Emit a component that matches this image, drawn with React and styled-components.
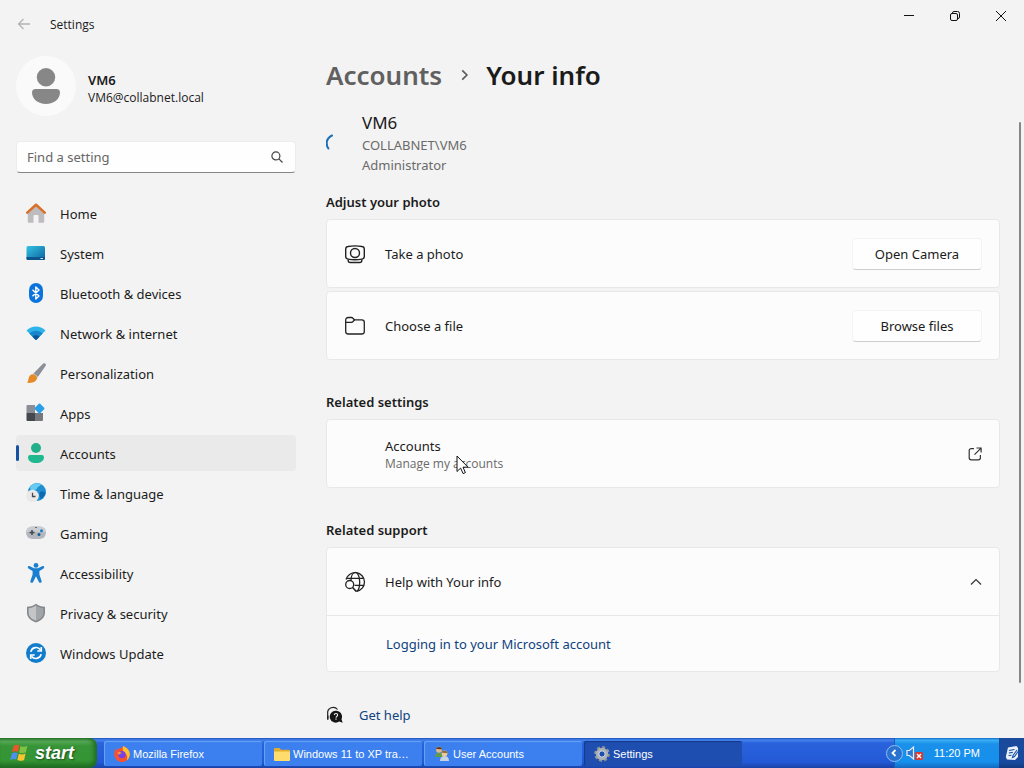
import React from 'react'
import styled, { createGlobalStyle } from 'styled-components'

const HomeIcon = () => (
    <svg width="20" height="20" viewBox="0 0 20 20">
        <path d="M1.800 9.500 10 2.400l8.200 7.100V19a.8.8 0 0 1-.8.8h-4.900V13a1 1 0 0 0-1-1h-3a1 1 0 0 0-1 1v6.800H2.600a.8.8 0 0 1-.8-.8z" fill="#bfbcc0" />
        <path d="M1.300 9.600 10 1.800l8.700 7.800" fill="none" stroke="#d9712b" strokeWidth="2.600" strokeLinecap="round" strokeLinejoin="round" />
    </svg>
)

const SystemIcon = () => (
    <svg width="20" height="20" viewBox="0 0 20 20">
        <defs>
            <linearGradient id="screen" x1="0" y1="0" x2="1" y2="1">
                <stop offset="0" stopColor="#35c3e0" />
                <stop offset="1" stopColor="#0a62a3" />
            </linearGradient>
        </defs>
        <rect x="0.500" y="3" width="18.500" height="14" rx="1.500" fill="url(#screen)" />
        <path d="M.5 14h18.500v1.500A1.500 1.500 0 0 1 17.500 17h-15A1.500 1.500 0 0 1 .5 15.500z" fill="#0b548c" />
        <path d="M14.500 15.500h2.500" stroke="#d7eef8" strokeWidth="1" />
    </svg>
)

const BluetoothIcon = () => (
    <svg width="20" height="20" viewBox="0 0 20 20">
        <rect x="3" y="0" width="14" height="20" rx="7" fill="#0a74dc" />
        <path d="M6.500 6.800 13 13l-3.200 3V4L13 7l-6.500 6.200" fill="none" stroke="#fff" strokeWidth="1.400" strokeLinejoin="round" />
    </svg>
)

const NetworkIcon = () => (
    <svg width="20" height="20" viewBox="0 0 20 20">
        <path d="M.5 7.500C5.800 2.200 14.200 2.200 19.500 7.500L10.700 16.600a1 1 0 0 1-1.400 0z" fill="#2fb4ea" />
        <path d="M3.400 10.400c3.700-3.500 9.500-3.500 13.200 0l-5.900 6.200a1 1 0 0 1-1.400 0z" fill="#1585cc" />
        <path d="M6.500 13.700c2-1.800 5-1.800 7 0l-2.800 2.900a1 1 0 0 1-1.400 0z" fill="#0b5596" />
    </svg>
)

const BrushIcon = () => (
    <svg width="20" height="20" viewBox="0 0 20 20">
        <path d="M19.200.5c.9.7.9 1.700.3 2.600L11.500 14.500 7 11 16.700.9c.7-.8 1.700-.9 2.500-.4z" fill="#8c8f96" />
        <path d="m7.800 10.200 4.400 3.500-1.600 2.100-4.500-3.600z" fill="#c6c8cc" />
        <path d="M6.600 11.200c2.400.2 4.400 2 4.400 4.100-.8 3.700-5.700 5.400-10.200 4.200 1.700-1.200 1.200-2.600 1.900-4.600.7-2.200 1.900-3.600 3.900-3.700z" fill="#e68a27" />
    </svg>
)

const AppsIcon = () => (
    <svg width="20" height="20" viewBox="0 0 20 20">
        <path d="M1.500 2H9v8H.5V3a1 1 0 0 1 1-1z" fill="#8b8e92" />
        <path d="M.5 10H9v8H1.500a1 1 0 0 1-1-1z" fill="#45484d" />
        <path d="M9 10h8v7a1 1 0 0 1-1 1H9z" fill="#75787c" />
        <rect x="9.700" y="1.700" width="7.600" height="7.600" rx="1" transform="rotate(45 13.500 5.500)" fill="#2b9fe6" />
    </svg>
)

const AccountsIcon = () => (
    <svg width="20" height="20" viewBox="0 0 20 20">
        <circle cx="10" cy="5" r="5" fill="#22b08a" />
        <path d="M4.200 12h11.600A2.200 2.200 0 0 1 18 14.200c0 3.600-3.500 5.800-8 5.800s-8-2.200-8-5.800A2.200 2.200 0 0 1 4.200 12z" fill="#20b98f" />
    </svg>
)

const TimeIcon = () => (
    <svg width="20" height="20" viewBox="0 0 20 20">
        <circle cx="11" cy="9" r="9" fill="#1f8fd1" />
        <path d="M4 4c3-3.600 7.500-4.500 11-2.800-1 2.500-3.500 2-4 4.300-.5 2-4 1-6 3.500z" fill="#66cdf0" />
        <path d="M14 9c2-1.500 4-.5 5.500 1-.7 3-2.500 5-5 6-.2-2.500-2-4.500-.5-7z" fill="#0d6cb1" />
        <circle cx="6.500" cy="13" r="6.300" fill="#ebe9e8" />
        <path d="M6.500 9.800v3.700h3" fill="none" stroke="#45484d" strokeWidth="1.300" />
    </svg>
)

const GamingIcon = () => (
    <svg width="20" height="20" viewBox="0 0 20 20">
        <rect x="0" y="3.500" width="20" height="12.500" rx="6.250" fill="#b3b8be" />
        <path d="M6.250 3.500h7.500c4 0 6.250 3 6.250 5.500H0c0-2.500 2.250-5.500 6.250-5.500z" fill="#c9cdd2" />
        <path d="M6 7v5M3.500 9.500h5" stroke="#43464b" strokeWidth="1.500" />
        <circle cx="15.500" cy="7.800" r="1.500" fill="#1a80c0" />
        <circle cx="13" cy="11.600" r="1.500" fill="#125f96" />
        <path d="M9 4.500h2" stroke="#66696e" strokeWidth="1" />
    </svg>
)

const AccessibilityIcon = () => (
    <svg width="20" height="20" viewBox="0 0 20 20">
        <circle cx="10" cy="2.400" r="2.400" fill="#1a7fd0" />
        <path d="M3.500 3 8 5.300h4L16.500 3c1.500-.6 2.400 1.600 1.100 2.400L13.400 8v3.500l2.200 6.500c.5 1.800-2 2.600-2.700.9L10 13.300l-2.900 5.600c-.7 1.700-3.200.9-2.700-.9l2.200-6.500V8L2.400 5.400C1.100 4.600 2 2.400 3.500 3z" fill="#1a7fd0" />
    </svg>
)

const PrivacyIcon = () => (
    <svg width="20" height="20" viewBox="0 0 20 20">
        <path d="M10 .8c2.500 2 5.500 2.900 9 3v5.700c0 4.700-3.400 8-9 10-5.600-2-9-5.300-9-10V3.800c3.500-.1 6.500-1 9-3z" fill="#85888b" />
        <path d="M10 2.500v15.300c-4.700-1.800-7.400-4.500-7.400-8.300V5.200C5.400 5 7.900 4.100 10 2.500z" fill="#c3c5c6" />
        <path d="M10 2.500v15.300c4.700-1.800 7.400-4.500 7.400-8.300V5.200C14.600 5 12.100 4.100 10 2.500z" fill="#a2a5a7" />
    </svg>
)

const UpdateIcon = () => (
    <svg width="20" height="20" viewBox="0 0 20 20">
        <circle cx="10" cy="10" r="10" fill="#127ccc" />
        <path d="M4.800 8.800a5.400 5.400 0 0 1 9.700-2M15.200 11.200a5.400 5.400 0 0 1-9.700 2" fill="none" stroke="#fff" strokeWidth="1.600" />
        <path d="M15.300 4v4h-4M4.700 16v-4h4" fill="none" stroke="#fff" strokeWidth="1.600" />
    </svg>
)

const CameraIcon = () => (
    <svg width="22" height="22" viewBox="0 0 22 22" fill="none" stroke="#222" strokeWidth="1.400">
        <path d="M4 3.500Q11 2.300 18 3.500A2.600 2.600 0 0 1 20.300 6v7.600a2.600 2.600 0 0 1-2.300 2.500Q11 17.300 4 16.100a2.600 2.600 0 0 1-2.300-2.500V6A2.600 2.600 0 0 1 4 3.500z" />
        <circle cx="11" cy="10" r="4.500" />
        <path d="M4.200 16.500v1a2 2 0 0 0 2 2h9.600a2 2 0 0 0 2-2v-1" />
    </svg>
)

const FolderIcon = () => (
    <svg width="22" height="22" viewBox="0 0 22 22" fill="none" stroke="#222" strokeWidth="1.300">
        <path d="M1.700 16.500V5a2.500 2.500 0 0 1 2.500-2.500h3.200a2 2 0 0 1 1.500.7l1.500 1.600h7.400A2.500 2.500 0 0 1 20.300 7.300v9.200a2.500 2.500 0 0 1-2.500 2.500H4.200a2.500 2.500 0 0 1-2.500-2.500z" />
        <path d="M1.700 7.300h5.700a2 2 0 0 0 1.400-.6l1.800-1.900" />
    </svg>
)

const GlobeSearchIcon = () => (
    <svg width="22" height="22" viewBox="0 0 22 22" fill="none" stroke="#222" strokeWidth="1.300">
        <path d="M2 8.500a9.400 9.400 0 1 1 10.500 11.800" />
        <path d="M7 9c.2-4.200 2-7.600 4.300-7.600 2.500 0 4.400 4.200 4.400 9.400s-1.300 9-3.200 9.500" />
        <path d="M2.600 7.400h17.400M10.500 14.400H20" />
        <circle cx="5.700" cy="13.500" r="4" />
        <path d="m8.600 16.500 3.700 4" strokeWidth="1.600" />
    </svg>
)

const HelpIcon = () => (
    <svg width="18" height="18" viewBox="0 0 18 18">
        <path d="M1.700 13.500V7.500A5.500 5.500 0 0 1 11.500 3.500" fill="none" stroke="#222" strokeWidth="1.200" />
        <path d="M1 9.500h1.500v4H1z" fill="#222" />
        <path d="M10 4.700a6 6 0 0 1 5.500 8.500l1.200 3.600-3.500-1.200A6 6 0 1 1 10 4.700z" fill="#161616" />
        <path d="M8.300 9c.2-2 3.400-1.900 3.300 0 0 1.300-1.500 1.300-1.600 2.600M10 12.600v1.100" fill="none" stroke="#f3f3f3" strokeWidth="1.100" />
    </svg>
)

const OpenIcon = () => (
    <svg width="14" height="14" viewBox="0 0 14 14" fill="none" stroke="#333" strokeWidth="1.200">
        <path d="M6 1.600H3.200A2 2 0 0 0 1.200 3.600v7.200a2 2 0 0 0 2 2h7.200a2 2 0 0 0 2-2V8" />
        <path d="M8.500 1h4.600v4.600M13 1.200 6.500 7.700" />
    </svg>
)

const Chevron = ({ up, size = 12 }) => (
    <svg width={size} height={size} viewBox="0 0 12 12" fill="none" stroke={up ? '#333' : '#5c5c5c'} strokeWidth={up ? 1.2 : 1.4}>
        <path d={up ? 'M1 8.500 6 3.500l5 5' : 'M4.500 2 8.500 6l-4 4'} />
    </svg>
)

const BackIcon = () => (
    <svg width="14" height="12" viewBox="0 0 14 12" fill="none" stroke="#b4b4b4" strokeWidth="1.300">
        <path d="M13 6H1.500M6.500 1l-5 5 5 5" />
    </svg>
)

const SearchIcon = () => (
    <svg width="12" height="12" viewBox="0 0 12 12" fill="none" stroke="#444" strokeWidth="1.200">
        <circle cx="4.900" cy="4.900" r="4" />
        <path d="m7.900 7.900 3.600 3.600" />
    </svg>
)

const Person = () => (
    <svg width="28" height="36" viewBox="0 0 28 36" fill="#878787">
        <circle cx="14" cy="9.300" r="9.200" />
        <path d="M3.500 21h21a3.500 3.500 0 0 1 3.500 3.500C28 31 22 36 14 36S0 31 0 24.500A3.500 3.500 0 0 1 3.500 21z" />
    </svg>
)

const Spinner = () => (
    <svg width="8" height="20" viewBox="0 0 8 20" fill="none">
        <path d="M6 2.500C0 5.500-.5 11 2.400 15.500" stroke="#1a6fb5" strokeWidth="2" strokeLinecap="round" />
    </svg>
)

const Pointer = () => (
    <svg width="13" height="20" viewBox="0 0 13 20">
        <path d="M1 1v15.500l3.600-3.400 2.500 5.500 2.300-1-2.400-5.400h5z" fill="#fff" stroke="#111" strokeWidth="1" />
    </svg>
)

const FlagIcon = () => (
    <svg width="20" height="20" viewBox="0 0 18 18">
        <path d="M3.200 2.500C5 1.200 7 1.300 8.500 2.200L7.200 8C5.500 7 3.700 7.200 1.900 8.300z" fill="#e8562a" />
        <path d="M9.500 2.700c1.900 1 3.900.9 6.200-.2L14.300 8.300c-2.300 1.100-4.200 1-6.100.2z" fill="#7dc243" />
        <path d="M1.600 9.400c1.900-1.100 3.700-1.200 5.300-.3l-1.300 5.800c-1.700-.9-3.500-.8-5.400.3z" fill="#4f8ff0" />
        <path d="M7.900 9.600c2 .9 3.900.9 6.100-.1l-1.300 5.700c-2.200 1.100-4.200 1.100-6.100.2z" fill="#f7c52d" />
    </svg>
)

const FirefoxIcon = () => (
    <svg width="16" height="16" viewBox="0 0 16 16">
        <path d="M8 1.800c1-.9 1.300-1.800 1.300-1.800 3.500 1.500 6.500 4.400 6.500 8.300a7.800 7.800 0 0 1-15.600 0c0-2.500 1-4.800 2-6 .2 1.200.8 1.700 1.300 1.900C4.500 2.600 6.300 1.800 8 1.800z" fill="#f6522f" />
        <path d="M9.300 0c3.500 1.500 6.500 4.400 6.500 8.300 0 2.500-1.200 4.700-3 6.100 1.300-4.400-.2-6.500-2.500-8C8.800 5.300 8 2.500 9.300 0z" fill="#ffc22e" />
        <circle cx="8" cy="8.700" r="3.600" fill="#7542e5" />
        <path d="M3.500 6.500c1.600-1 3.400-.3 4.200.7-1.200.3-2.200.7-2.700 1.800z" fill="#ff9b35" />
    </svg>
)

const XpFolderIcon = () => (
    <svg width="16" height="14" viewBox="0 0 16 14">
        <path d="M0 2a1 1 0 0 1 1-1h4.500L7 2.700h8a1 1 0 0 1 1 1V13H0z" fill="#e2ac30" />
        <path d="M0 4.500h16V13a1 1 0 0 1-1 1H1a1 1 0 0 1-1-1z" fill="#ffdc6b" />
    </svg>
)

const UsersIcon = () => (
    <svg width="16" height="16" viewBox="0 0 16 16">
        <path d="M1 11c0-3 1.500-4.500 4-4.500S9 8 9 11z" fill="#5e9b4c" />
        <circle cx="5" cy="3.700" r="3" fill="#e5b887" />
        <path d="M2 3.300C2 .5 8 .2 8 3.300 6 3.500 4 2.500 2 3.300z" fill="#5b3c22" />
        <path d="M6 15c0-3.500 1.800-5 4.500-5s4.500 1.500 4.500 5z" fill="#c8d3e2" />
        <circle cx="10.500" cy="7.500" r="2.900" fill="#f0c99a" />
        <path d="M7.600 7c0-3 5.800-3 5.800 0-2 .2-3.800-.8-5.800 0z" fill="#8d6a31" />
    </svg>
)

const GearIcon = () => (
    <svg width="16" height="16" viewBox="0 0 16 16">
        <circle cx="8" cy="8" r="6.600" fill="none" stroke="#8b9599" strokeWidth="2.600" strokeDasharray="2.900 2.280" />
        <circle cx="8" cy="8" r="4.700" fill="none" stroke="#aab2b3" strokeWidth="3" />
        <circle cx="8" cy="8" r="3.200" fill="#1f4fae" stroke="#e8eced" strokeWidth="1" />
    </svg>
)

const VolumeIcon = () => (
    <svg width="18" height="16" viewBox="0 0 18 16">
        <path d="M1 5.500h2.500L7.500 2v12l-4-3.500H1z" fill="#2a7bd8" stroke="#e6eef8" strokeWidth="1.200" />
        <rect x="9" y="7" width="8" height="8" rx="1" fill="#d93a2f" />
        <path d="m11 9 4 4m0-4-4 4" stroke="#fff" strokeWidth="1.400" />
    </svg>
)

const NotesIcon = () => (
    <svg width="14" height="16" viewBox="0 0 14 16">
        <path d="M3 2.500 11.500 1 13 3v9l-3 3-8-.5L.8 12z" fill="#e9f2fb" />
        <path d="M4 5.500 9.500 4.500M3.800 8l4-.6M3.500 10.500l3-.3M12 5 8 10.500l-.5 2 2-1L13 6.500" fill="none" stroke="#1b4f9f" strokeWidth="1.100" />
    </svg>
)

const navItems = [
    { label: 'Home', icon: <HomeIcon /> },
    { label: 'System', icon: <SystemIcon /> },
    { label: 'Bluetooth & devices', icon: <BluetoothIcon /> },
    { label: 'Network & internet', icon: <NetworkIcon /> },
    { label: 'Personalization', icon: <BrushIcon /> },
    { label: 'Apps', icon: <AppsIcon /> },
    { label: 'Accounts', icon: <AccountsIcon />, active: true },
    { label: 'Time & language', icon: <TimeIcon /> },
    { label: 'Gaming', icon: <GamingIcon /> },
    { label: 'Accessibility', icon: <AccessibilityIcon /> },
    { label: 'Privacy & security', icon: <PrivacyIcon /> },
    { label: 'Windows Update', icon: <UpdateIcon /> },
]

const photoRows = [
    { label: 'Take a photo', action: 'Open Camera', icon: <CameraIcon /> },
    { label: 'Choose a file', action: 'Browse files', icon: <FolderIcon /> },
]

const tasks = [
    { label: 'Mozilla Firefox', icon: <FirefoxIcon /> },
    { label: 'Windows 11 to XP tran...', icon: <XpFolderIcon /> },
    { label: 'User Accounts', icon: <UsersIcon /> },
    { label: 'Settings', icon: <GearIcon />, active: true },
]

const TitleBar = () => (
    <Header>
        <BackButton aria-label="Back"><BackIcon /></BackButton>
        <AppName>Settings</AppName>
        <WindowButtons>
            <WindowButton aria-label="Minimize">
                <svg width="10" height="10" viewBox="0 0 10 10"><path d="M0 4.500h10" stroke="#111" /></svg>
            </WindowButton>
            <WindowButton aria-label="Restore">
                <svg width="10" height="10" viewBox="0 0 10 10" fill="none" stroke="#111">
                    <rect x="0.500" y="2.500" width="7" height="7" rx="1.500" />
                    <path d="M2.500 2.500V2A1.500 1.500 0 0 1 4 .5h3.500a2 2 0 0 1 2 2V6A1.500 1.500 0 0 1 8 7.500h-.5" />
                </svg>
            </WindowButton>
            <WindowButton aria-label="Close">
                <svg width="10" height="10" viewBox="0 0 10 10"><path d="m0 0 10 10m0-10-10 10" stroke="#111" /></svg>
            </WindowButton>
        </WindowButtons>
    </Header>
)

const Sidebar = () => (
    <Side>
        <User>
            <Avatar><Person /></Avatar>
            <div>
                <UserName>VM6</UserName>
                <UserMail>VM6@collabnet.local</UserMail>
            </div>
        </User>
        <SearchBox>
            <SearchInput type="text" placeholder="Find a setting" aria-label="Find a setting" />
            <SearchIcon />
        </SearchBox>
        <Nav>
            {navItems.map((item) => (
                <NavLink href="#" key={item.label} $active={item.active}>
                    {item.icon}
                    <NavLabel>{item.label}</NavLabel>
                </NavLink>
            ))}
        </Nav>
    </Side>
)

const Taskbar = () => (
    <Bar>
        <StartButton><FlagIcon />start</StartButton>
        <TaskList>
            {tasks.map((task) => (
                <Task key={task.label} $active={task.active}>
                    {task.icon}
                    <TaskLabel>{task.label}</TaskLabel>
                </Task>
            ))}
        </TaskList>
        <TrayToggle aria-label="Show hidden icons">
            <svg width="8" height="8" viewBox="0 0 8 8"><path d="M5.500 1 2.500 4l3 3" fill="none" stroke="#fff" strokeWidth="1.800" /></svg>
        </TrayToggle>
        <Tray>
            <VolumeIcon />
            <Clock>11:20 PM</Clock>
        </Tray>
        <Corner><NotesIcon /></Corner>
    </Bar>
)

const App = () => {
    return (
        <>
            <GlobalStyle />
            <Desktop>
                <TitleBar />
                <Body>
                    <Sidebar />
                    <Main>
                        <Breadcrumb>
                            <Crumb href="#">Accounts</Crumb>
                            <Chevron size={14} />
                            <PageTitle>Your info</PageTitle>
                        </Breadcrumb>
                        <Scroller>
                            <Content>
                                <Profile>
                                    <Spinner />
                                    <div>
                                        <ProfileName>VM6</ProfileName>
                                        <ProfileLine>COLLABNET\VM6</ProfileLine>
                                        <ProfileLine>Administrator</ProfileLine>
                                    </div>
                                </Profile>

                                <Section>
                                    <Heading>Adjust your photo</Heading>
                                    {photoRows.map((row) => (
                                        <Card key={row.label}>
                                            <Row>
                                                <IconSlot>{row.icon}</IconSlot>
                                                <RowText>{row.label}</RowText>
                                                <ActionButton>{row.action}</ActionButton>
                                            </Row>
                                        </Card>
                                    ))}
                                </Section>

                                <Section>
                                    <Heading>Related settings</Heading>
                                    <Card>
                                        <Row as="a" href="#">
                                            <IconSlot />
                                            <RowText>
                                                Accounts
                                                <RowHint>
                                                    Manage my accounts
                                                    <Cursor><Pointer /></Cursor>
                                                </RowHint>
                                            </RowText>
                                            <OpenIcon />
                                        </Row>
                                    </Card>
                                </Section>

                                <Section>
                                    <Heading>Related support</Heading>
                                    <Card>
                                        <Row as="button" aria-expanded="true">
                                            <IconSlot><GlobeSearchIcon /></IconSlot>
                                            <RowText>Help with Your info</RowText>
                                            <Chevron up />
                                        </Row>
                                        <SubRow>
                                            <Link href="#">Logging in to your Microsoft account</Link>
                                        </SubRow>
                                    </Card>
                                </Section>

                                <HelpRow>
                                    <HelpIcon />
                                    <Link href="#">Get help</Link>
                                </HelpRow>
                            </Content>
                            <ScrollThumb />
                        </Scroller>
                    </Main>
                </Body>
                <Taskbar />
            </Desktop>
        </>
    )
}

export default App

const GlobalStyle = createGlobalStyle`
    * {
        box-sizing: border-box;
    }
    body {
        margin: 0;
        background: #f3f3f3;
        color: #1b1b1b;
        font-family: "Noto Sans", "Open Sans", sans-serif;
        font-size: 13px;
        line-height: 20px;
    }
    button, input {
        font: inherit;
        color: inherit;
    }
    a {
        color: inherit;
        text-decoration: none;
    }
    svg {
        display: block;
        flex-shrink: 0;
    }
`;
const Desktop = styled.div`
    min-height: 100vh;
    display: flex;
    flex-direction: column;
`;
const Header = styled.header`
    display: flex;
    align-items: center;
    height: 48px;
    padding-left: 8px;
`;
const BackButton = styled.button`
    display: flex;
    align-items: center;
    justify-content: center;
    width: 32px;
    height: 32px;
    padding: 0;
    border: none;
    background: none;
`;
const AppName = styled.span`
    flex: 1;
    padding: 2px 0 0 10px;
    font-family: "Open Sans", sans-serif;
    font-size: 12px;
`;
const WindowButtons = styled.div`
    display: flex;
    align-self: flex-start;
`;
const WindowButton = styled.button`
    display: flex;
    align-items: center;
    justify-content: center;
    width: 46px;
    height: 32px;
    padding: 0;
    border: none;
    background: none;
`;
const Body = styled.div`
    flex: 1;
    display: flex;
    gap: 30px;
    padding: 8px 3px 0 16px;
`;
const Side = styled.aside`
    flex: 0 0 280px;
`;
const User = styled.div`
    display: flex;
    align-items: center;
    gap: 12px;
`;
const Avatar = styled.div`
    display: flex;
    align-items: center;
    justify-content: center;
    width: 60px;
    height: 60px;
    border-radius: 50%;
    background: #fafafa;
`;
const UserName = styled.div`
    font-weight: 600;
    line-height: 18px;
    padding-top: 5px;
`;
const UserMail = styled.div`
    font-family: "Open Sans", sans-serif;
    font-size: 12px;
    line-height: 18px;
`;
const SearchBox = styled.div`
    display: flex;
    align-items: center;
    height: 32px;
    margin: 25px 0 22px;
    padding: 0 12px 0 10px;
    border: 1px solid #ececec;
    border-bottom-color: #868686;
    border-radius: 4px;
    background: #fefefe;
`;
const SearchInput = styled.input`
    flex: 1;
    min-width: 0;
    padding: 0;
    border: none;
    outline: none;
    background: none;
    &::placeholder {
        color: #666;
        opacity: 1;
    }
`;
const Nav = styled.nav`
    display: flex;
    flex-direction: column;
    gap: 4px;
`;
const NavLink = styled.a`
    position: relative;
    display: flex;
    align-items: center;
    gap: 14px;
    height: 36px;
    padding: 0 10px;
    border-radius: 4px;
    background: ${({ $active }) => ($active ? '#eaeaea' : 'none')};
    &::before {
        content: "";
        display: ${({ $active }) => ($active ? 'block' : 'none')};
        position: absolute;
        left: 0;
        width: 3px;
        height: 16px;
        border-radius: 2px;
        background: #1652a0;
    }
`;
const NavLabel = styled.span`
    padding-top: 2px;
`;
const Main = styled.main`
    flex: 1;
    min-width: 0;
    display: flex;
    flex-direction: column;
`;
const Breadcrumb = styled.div`
    display: flex;
    align-items: center;
    gap: 15px;
    padding-top: 1px;
    font-size: 26px;
    font-weight: 600;
    line-height: 36px;
`;
const Crumb = styled.a`
    color: #606060;
`;
const PageTitle = styled.h1`
    margin: 0;
    font-size: inherit;
    font-weight: inherit;
`;
const Scroller = styled.div`
    flex: 1;
    display: flex;
    justify-content: space-between;
    gap: 19px;
    padding-top: 18px;
`;
const Content = styled.div`
    flex: 1;
    min-width: 0;
`;
const ScrollThumb = styled.div`
    width: 2px;
    margin: 11px 0 55px;
    border-radius: 1px;
    background: #868686;
`;
const Profile = styled.div`
    display: flex;
    align-items: center;
    gap: 28px;
`;
const ProfileName = styled.div`
    font-size: 17px;
    line-height: 24px;
`;
const ProfileLine = styled.div`
    color: #6a6a6a;
`;
const Section = styled.section`
    display: flex;
    flex-direction: column;
    gap: 3px;
    margin-bottom: 32px;
`;
const Heading = styled.h2`
    margin: 0;
    padding: 17px 0 4px;
    font-size: 13px;
    font-weight: 600;
    line-height: 20px;
    ${Section} + ${Section} & {
        padding-top: 0;
    }
`;
const Card = styled.div`
    border: 1px solid #e8e8e8;
    border-radius: 4px;
    background: #fcfcfc;
`;
const Row = styled.div`
    display: flex;
    align-items: center;
    width: 100%;
    height: 67px;
    padding: 0 17px;
    border: none;
    background: none;
    text-align: left;
`;
const IconSlot = styled.span`
    flex: 0 0 41px;
`;
const RowText = styled.span`
    flex: 1;
`;
const RowHint = styled.span`
    position: relative;
    display: block;
    width: fit-content;
    color: #6a6a6a;
    font-family: "Open Sans", sans-serif;
    font-size: 12px;
    line-height: 16px;
`;
const Cursor = styled.span`
    position: absolute;
    left: 71px;
    top: -1px;
`;
const ActionButton = styled.button`
    width: 130px;
    height: 32px;
    padding: 0;
    border: 1px solid #f3f3f3;
    border-bottom-color: #cfcfcf;
    border-radius: 4px;
    background: #fefefe;
`;
const SubRow = styled.div`
    display: flex;
    align-items: center;
    height: 56px;
    padding: 0 59px;
    border-top: 1px solid #e8e8e8;
`;
const Link = styled.a`
    color: #0f4280;
`;
const HelpRow = styled.div`
    display: flex;
    align-items: center;
    gap: 15px;
    padding: 1px 0 12px;
`;
const Bar = styled.footer`
    display: flex;
    height: 30px;
    background: linear-gradient(#1f4fb8 0, #4484ee 2px, #2a62dc 5px, #2359d6 24px, #1a43a6 30px);
    color: #fff;
    font-family: "Liberation Sans", sans-serif;
    font-size: 11px;
`;
const StartButton = styled.button`
    display: flex;
    align-items: center;
    gap: 5px;
    width: 97px;
    padding: 0 0 0 10px;
    border: none;
    border-radius: 0 8px 8px 0;
    background: linear-gradient(#2f7a2f 0, #57a957 3px, #379437 8px, #349634 22px, #1f6a22 30px);
    box-shadow: inset -3px 0 4px #1f6b24;
    color: #fff;
    font-size: 18px;
    font-style: italic;
    font-weight: 700;
    text-shadow: 1px 1px 2px #1c4a1c;
`;
const TaskList = styled.div`
    flex: 1;
    display: flex;
    gap: 2px;
    padding: 3px 7px 2px;
`;
const Task = styled.button`
    flex: 0 1 158px;
    min-width: 0;
    display: flex;
    align-items: center;
    gap: 3px;
    padding: 0 10px;
    border: none;
    border-radius: 2px;
    background: ${({ $active }) => ($active ? '#1e4eb0' : '#3b80ee')};
    box-shadow: inset 1px 1px 1px ${({ $active }) => ($active ? '#153a8a' : '#6ba2f7')};
`;
const TaskLabel = styled.span`
    overflow: hidden;
    white-space: nowrap;
    text-overflow: ellipsis;
`;
const TrayToggle = styled.button`
    z-index: 1;
    align-self: center;
    display: flex;
    align-items: center;
    justify-content: center;
    width: 17px;
    height: 17px;
    margin-right: -9px;
    padding: 0;
    border: 1px solid #8cc0f5;
    border-radius: 50%;
    background: #2a72cf;
`;
const Tray = styled.div`
    display: flex;
    align-items: center;
    gap: 10px;
    padding: 0 19px 0 11px;
    border-left: 1px solid #1a5cb8;
    background: linear-gradient(#1568c8 0, #3ab0f5 2px, #1a90ea 6px, #1590ec 24px, #1468bd 30px);
`;
const Clock = styled.time`
    white-space: nowrap;
`;
const Corner = styled.div`
    display: flex;
    align-items: center;
    justify-content: center;
    width: 25px;
    background: linear-gradient(#1a4a9c, #174a9e 24px, #123a80);
`;
